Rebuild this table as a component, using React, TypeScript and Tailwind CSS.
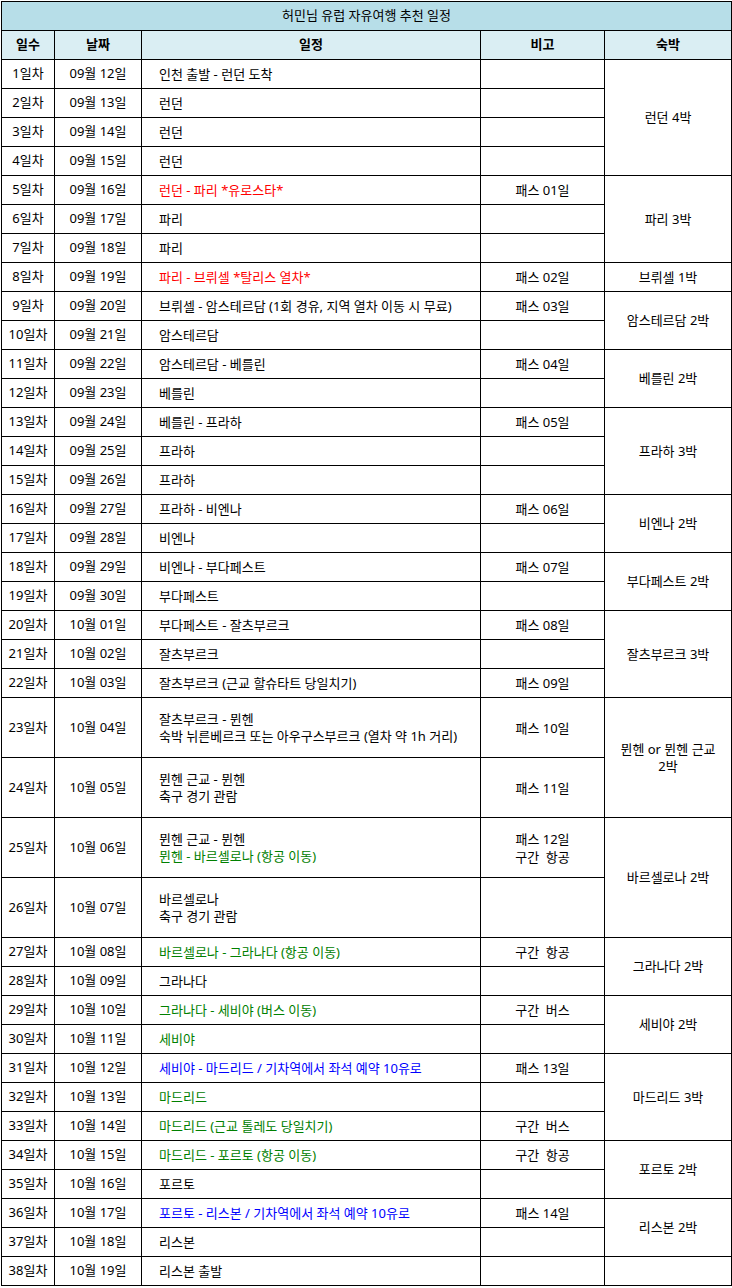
import React from "react";

type Seg = { t: string; c?: "red" | "green" | "blue" };
type Row = {
  day: string;
  date: string;
  plan: Seg[][];
  note?: string[];
  stay?: { text: string[]; span: number };
  tall?: boolean;
};

const colorCls: Record<string, string> = {
  red: "text-[#ff0000]",
  green: "text-[#008000]",
  blue: "text-[#0000ff]",
};

const L = (t: string, c?: "red" | "green" | "blue"): Seg[] => [{ t, c }];

const rows: Row[] = [
  { day: "1일차", date: "09월 12일", plan: [L("인천 출발 - 런던 도착")], stay: { text: ["런던 4박"], span: 4 } },
  { day: "2일차", date: "09월 13일", plan: [L("런던")] },
  { day: "3일차", date: "09월 14일", plan: [L("런던")] },
  { day: "4일차", date: "09월 15일", plan: [L("런던")] },
  { day: "5일차", date: "09월 16일", plan: [L("런던 - 파리 *유로스타*", "red")], note: ["패스 01일"], stay: { text: ["파리 3박"], span: 3 } },
  { day: "6일차", date: "09월 17일", plan: [L("파리")] },
  { day: "7일차", date: "09월 18일", plan: [L("파리")] },
  { day: "8일차", date: "09월 19일", plan: [L("파리 - 브뤼셀 *탈리스 열차*", "red")], note: ["패스 02일"], stay: { text: ["브뤼셀 1박"], span: 1 } },
  { day: "9일차", date: "09월 20일", plan: [L("브뤼셀 - 암스테르담 (1회 경유, 지역 열차 이동 시 무료)")], note: ["패스 03일"], stay: { text: ["암스테르담 2박"], span: 2 } },
  { day: "10일차", date: "09월 21일", plan: [L("암스테르담")] },
  { day: "11일차", date: "09월 22일", plan: [L("암스테르담 - 베를린")], note: ["패스 04일"], stay: { text: ["베를린 2박"], span: 2 } },
  { day: "12일차", date: "09월 23일", plan: [L("베를린")] },
  { day: "13일차", date: "09월 24일", plan: [L("베를린 - 프라하")], note: ["패스 05일"], stay: { text: ["프라하 3박"], span: 3 } },
  { day: "14일차", date: "09월 25일", plan: [L("프라하")] },
  { day: "15일차", date: "09월 26일", plan: [L("프라하")] },
  { day: "16일차", date: "09월 27일", plan: [L("프라하 - 비엔나")], note: ["패스 06일"], stay: { text: ["비엔나 2박"], span: 2 } },
  { day: "17일차", date: "09월 28일", plan: [L("비엔나")] },
  { day: "18일차", date: "09월 29일", plan: [L("비엔나 - 부다페스트")], note: ["패스 07일"], stay: { text: ["부다페스트 2박"], span: 2 } },
  { day: "19일차", date: "09월 30일", plan: [L("부다페스트")] },
  { day: "20일차", date: "10월 01일", plan: [L("부다페스트 - 잘츠부르크")], note: ["패스 08일"], stay: { text: ["잘츠부르크 3박"], span: 3 } },
  { day: "21일차", date: "10월 02일", plan: [L("잘츠부르크")] },
  { day: "22일차", date: "10월 03일", plan: [L("잘츠부르크 (근교 할슈타트 당일치기)")], note: ["패스 09일"] },
  {
    day: "23일차",
    date: "10월 04일",
    plan: [L("잘츠부르크 - 뮌헨"), L("숙박 뉘른베르크 또는 아우구스부르크 (열차 약 1h 거리)")],
    note: ["패스 10일"],
    stay: { text: ["뮌헨 or 뮌헨 근교", "2박"], span: 2 },
    tall: true,
  },
  { day: "24일차", date: "10월 05일", plan: [L("뮌헨 근교 - 뮌헨"), L("축구 경기 관람")], note: ["패스 11일"], tall: true },
  {
    day: "25일차",
    date: "10월 06일",
    plan: [L("뮌헨 근교 - 뮌헨"), L("뮌헨 - 바르셀로나 (항공 이동)", "green")],
    note: ["패스 12일", "구간  항공"],
    stay: { text: ["바르셀로나 2박"], span: 2 },
    tall: true,
  },
  { day: "26일차", date: "10월 07일", plan: [L("바르셀로나"), L("축구 경기 관람")], tall: true },
  { day: "27일차", date: "10월 08일", plan: [L("바르셀로나 - 그라나다 (항공 이동)", "green")], note: ["구간  항공"], stay: { text: ["그라나다 2박"], span: 2 } },
  { day: "28일차", date: "10월 09일", plan: [L("그라나다")] },
  { day: "29일차", date: "10월 10일", plan: [L("그라나다 - 세비야 (버스 이동)", "green")], note: ["구간  버스"], stay: { text: ["세비야 2박"], span: 2 } },
  { day: "30일차", date: "10월 11일", plan: [L("세비야", "green")] },
  { day: "31일차", date: "10월 12일", plan: [L("세비야 - 마드리드 / 기차역에서 좌석 예약 10유로", "blue")], note: ["패스 13일"], stay: { text: ["마드리드 3박"], span: 3 } },
  { day: "32일차", date: "10월 13일", plan: [L("마드리드", "green")] },
  { day: "33일차", date: "10월 14일", plan: [L("마드리드 (근교 톨레도 당일치기)", "green")], note: ["구간  버스"] },
  { day: "34일차", date: "10월 15일", plan: [L("마드리드 - 포르토 (항공 이동)", "green")], note: ["구간  항공"], stay: { text: ["포르토 2박"], span: 2 } },
  { day: "35일차", date: "10월 16일", plan: [L("포르토")] },
  { day: "36일차", date: "10월 17일", plan: [L("포르토 - 리스본 / 기차역에서 좌석 예약 10유로", "blue")], note: ["패스 14일"], stay: { text: ["리스본 2박"], span: 2 } },
  { day: "37일차", date: "10월 18일", plan: [L("리스본")] },
  { day: "38일차", date: "10월 19일", plan: [L("리스본 출발")], stay: { text: [""], span: 1 } },
];

const cell = "border border-black p-0 align-middle";

export default function App() {
  return (
    <div
      className="bg-white p-[1px] text-[13px] text-black"
      style={{ fontFamily: '"Noto Sans", "Noto Sans CJK KR", sans-serif' }}
    >
      <table className="w-[730px] table-fixed border-collapse">
        <colgroup>
          <col className="w-[53px]" />
          <col className="w-[87px]" />
          <col className="w-[339px]" />
          <col className="w-[124px]" />
          <col className="w-[127px]" />
        </colgroup>
        <tbody>
          <tr className="h-[29px]">
            <td colSpan={5} className={`${cell} bg-[#b7dee8] text-center`}>
              허민님 유럽 자유여행 추천 일정
            </td>
          </tr>
          <tr className="h-[29px] font-bold">
            <td className={`${cell} bg-[#daeef3] text-center`}>일수</td>
            <td className={`${cell} bg-[#daeef3] text-center`}>날짜</td>
            <td className={`${cell} bg-[#daeef3] text-center`}>일정</td>
            <td className={`${cell} bg-[#daeef3] text-center`}>비고</td>
            <td className={`${cell} bg-[#daeef3] text-center`}>숙박</td>
          </tr>
          {rows.map((r) => (
            <tr key={r.day} className={r.tall ? "h-[60px]" : "h-[29px]"}>
              <td className={`${cell} text-center`}>{r.day}</td>
              <td className={`${cell} text-center`}>{r.date}</td>
              <td className={`${cell} pl-[17px] leading-[17px]`}>
                {r.plan.map((line, i) => (
                  <div key={i} className="whitespace-pre">
                    {line.map((s, j) => (
                      <span key={j} className={s.c ? colorCls[s.c] : ""}>
                        {s.t}
                      </span>
                    ))}
                  </div>
                ))}
              </td>
              <td className={`${cell} text-center leading-[18px]`}>
                {(r.note ?? []).map((n, i) => (
                  <div key={i} className="whitespace-pre">
                    {n}
                  </div>
                ))}
              </td>
              {r.stay && (
                <td rowSpan={r.stay.span} className={`${cell} text-center leading-[17px]`}>
                  {r.stay.text.map((t, i) => (
                    <div key={i}>{t}</div>
                  ))}
                </td>
              )}
            </tr>
          ))}
        </tbody>
      </table>
    </div>
  );
}
